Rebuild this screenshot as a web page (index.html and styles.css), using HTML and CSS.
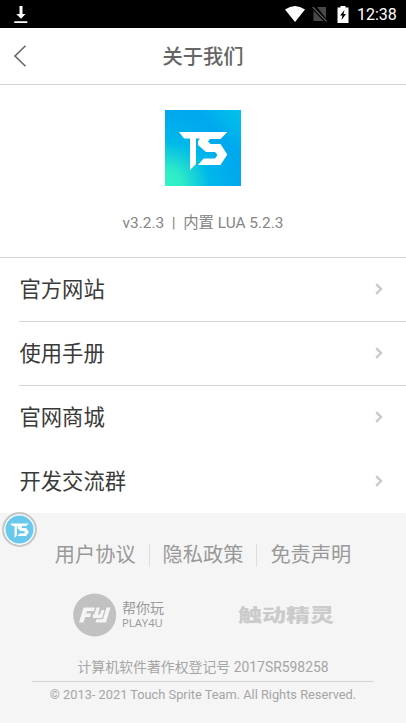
FILE: index.html
```
<!DOCTYPE html>
<html lang="zh-CN">
<head>
<meta charset="utf-8">
<title>关于我们</title>
<link rel="stylesheet" href="styles.css">
</head>
<body>
<svg class="defs" width="0" height="0">
  <symbol id="ts" viewBox="0 0 76 76"><path d="M14 22H62.3L55.5 29H45L43 31.5L45.500 34H55.500L62.3 44.500L55.500 55H33L38.500 48.500H50L52.500 45L50 42H41L33 35V31L35 28.500H31V54L25 60V28.500H19Z"/></symbol>
  <symbol id="chevron" viewBox="0 0 8 12"><path d="M1.2 1.2L6 6L1.2 10.8" fill="none" stroke="#c9c9c9" stroke-width="2.4"/></symbol>
</svg>
<div class="status">
  <svg class="download" width="14" height="18" viewBox="0 0 14 18"><path d="M5.5 0h3v8h3L7 12.8L2.3 8h3.2zM.3 15.2h13v1.7H.3z" fill="#fff"/></svg>
  <div class="tray">
    <svg width="20" height="16" viewBox="0 0 20 16"><path d="M0 3.5Q10-3.5 20 3.5L10 16Z" fill="#fff"/></svg>
    <svg class="sim" width="16" height="16" viewBox="0 0 16 16"><path d="M5 1h9v11.5zM1.5 4.5l10 10.5H1.5z" fill="#484848"/><path d="M.7 1L14.5 15.3" stroke="#606060" stroke-width="1.2"/></svg>
    <svg class="battery" width="12" height="17" viewBox="0 0 12 17"><path d="M.5 1.5h3V0h5v1.5h3V17H.5z" fill="#fff"/><path d="M7.5 4L3 9.6h2.4L4.5 14L9 8H6.5z" fill="#000"/></svg>
    <span class="time">12:38</span>
  </div>
</div>
<header class="header">
  <svg class="back" width="14" height="22" viewBox="0 0 14 22"><path d="M12.5 .8L2 11L12.5 21.2" fill="none" stroke="#666" stroke-width="1.6"/></svg>
  <h1>关于我们</h1>
</header>
<section class="about">
  <div class="logo"><svg width="76" height="76"><use href="#ts"/></svg></div>
  <p>v3.2.3 &nbsp;|&nbsp; 内置 LUA 5.2.3</p>
</section>
<nav class="list">
  <a class="row"><span>官方网站</span><svg width="8" height="12"><use href="#chevron"/></svg></a>
  <a class="row line"><span>使用手册</span><svg width="8" height="12"><use href="#chevron"/></svg></a>
  <a class="row"><span>官网商城</span><svg width="8" height="12"><use href="#chevron"/></svg></a>
  <a class="row"><span>开发交流群</span><svg width="8" height="12"><use href="#chevron"/></svg></a>
</nav>
<footer class="footer">
  <div class="links"><a>用户协议</a><a>隐私政策</a><a>免责声明</a></div>
  <div class="brands">
    <div class="play">
      <svg width="44" height="44" viewBox="0 0 44 44"><circle cx="21.7" cy="22" r="21.5" fill="#c1c1c1"/><path d="M10.500 14.500H22L21 18H14L13.300 20.500H18L17 24H12.200L10.500 29.500H6ZM23.500 14.500H27L24.800 21.500H27L28.500 17H31.500L29 25H19.500L20.200 21.500H21.300ZM33.500 14.500H37.500L33 29.500H22.500L23.500 26.300H30Z" fill="#f5f5f5"/></svg>
      <div class="play-text"><b>帮你玩</b><span>PLAY4U</span></div>
    </div>
    <div class="sprite">触动精灵</div>
  </div>
  <p class="reg">计算机软件著作权登记号 2017SR598258</p>
  <p class="copy">© 2013- 2021 Touch Sprite Team. All Rights Reserved.</p>
</footer>
<div class="float"><svg width="29" height="29"><use href="#ts"/></svg></div>
</body>
</html>
```
FILE: styles.css
```
* { box-sizing: border-box; }
body {
  margin: 0;
  height: 723px;
  overflow: hidden;
  position: relative;
  display: flex;
  flex-direction: column;
  background: #fff;
  font-family: Roboto, "Noto Sans CJK SC", sans-serif;
}
svg { display: block; flex: none; }
h1, p { margin: 0; font-weight: 400; }
.defs { position: absolute; }
.status {
  height: 28px;
  flex: none;
  background: #000;
  display: flex;
  justify-content: space-between;
  padding: 6px 9px 0 14px;
}
.tray { display: flex; }
.sim { margin-left: 7px; }
.battery { margin-left: 9px; }
.time { color: #fff; font-size: 16px; line-height: 18px; margin-left: 8px; width: 40px; white-space: nowrap; }
.header {
  height: 57px;
  flex: none;
  border-bottom: 1px solid #d4d4d4;
  display: grid;
  grid-template-columns: 60px 1fr 60px;
  align-items: center;
}
.back { margin-left: 13px; }
.header h1 { text-align: center; font-size: 20.3px; font-weight: 500; color: #666; line-height: 54px; padding-top: 2px; }
.about {
  height: 173px;
  flex: none;
  border-bottom: 1px solid #d4d4d4;
  display: flex;
  flex-direction: column;
  align-items: center;
  padding-top: 25px;
}
.logo {
  width: 76px;
  height: 76px;
  fill: #fff;
  background: radial-gradient(circle at 0 100%, #35f5c4 0, #2debc8 16%, rgba(0, 190, 232, .7) 42%, transparent 68%), linear-gradient(to top right, #00a8ee 70%, #00c5ea 100%);
}
.about p { margin-top: 25px; font-size: 15.4px; line-height: 24px; color: #858585; }
.row {
  height: 64px;
  margin-left: 19px;
  padding: 0 23px 4px .5px;
  display: flex;
  align-items: center;
  justify-content: space-between;
  color: #3a3a3a;
  font-size: 21.3px;
}
.row svg { margin-top: 3px; }
.row:first-child, .line { border-bottom: 1px solid #d4d4d4; }
.row:nth-child(n+3) { padding-bottom: 5px; }
.list, .footer { flex: none; }
.list { height: 255px; }
.footer { height: 210px; background: #f5f5f5; text-align: center; color: #a5a5a5; }
.links { display: flex; justify-content: center; padding-top: 31px; }
.links a { font-size: 20.2px; line-height: 23px; color: #999; padding: 0 13px; }
.links a + a { border-left: 1px solid #dedede; }
.brands { display: flex; height: 44px; margin-top: 26px; padding-left: 73px; align-items: center; }
.play { display: flex; align-items: center; width: 165px; }
.play-text { margin-left: 5px; text-align: left; color: #999; }
.play-text b, .play-text span { display: block; }
.play-text b { font-weight: 400; font-size: 14px; line-height: 15px; }
.play-text span { font-family: "Open Sans", sans-serif; font-size: 11.3px; line-height: 13px; }
.sprite { font-family: "Noto Sans CJK SC", sans-serif; font-size: 24px; font-weight: 900; line-height: 24px; color: #cbcbcb; transform: translateY(-1px) scaleY(.77); }
.reg { margin-top: 20px; font-size: 13.9px; line-height: 20px; }
.copy { margin: 4px 32px 0; padding-top: 4px; border-top: 1px solid #d4d4d4; font-size: 12.8px; line-height: 18px; white-space: nowrap; }
.float {
  position: absolute;
  left: 2px;
  top: 512px;
  width: 35px;
  height: 35px;
  border: 2px solid #c8c8c8;
  border-radius: 50%;
  background: #6bc8ed;
  box-shadow: inset 0 0 0 1.5px #fff;
  display: flex;
  align-items: center;
  justify-content: center;
  fill: #fff;
}
```
